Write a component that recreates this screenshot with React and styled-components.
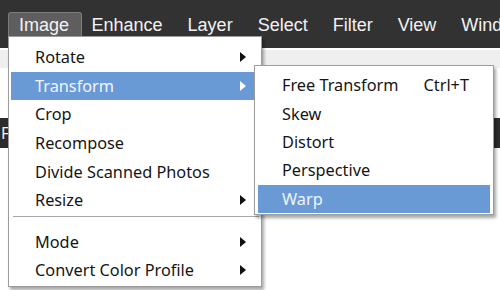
import React from "react";
import styled, { createGlobalStyle } from "styled-components";

const Global = createGlobalStyle`
  html, body {
    margin: 0;
    padding: 0;
    background: #ffffff;
  }
  body {
    width: 500px;
    height: 290px;
    overflow: hidden;
  }
`;

const Screen = styled.div`
  position: relative;
  width: 500px;
  height: 290px;
  background: #ffffff;
  overflow: hidden;
`;

const MenuBar = styled.div`
  display: flex;
  align-items: flex-start;
  height: 48px;
  padding: 12px 0 0 8px;
  background: #323232;
  box-sizing: border-box;
  overflow: hidden;
`;

const BarItem = styled.div`
  flex-shrink: 0;
  height: 24px;
  padding: ${(p) => (p.$active ? "0 12px 0 10px" : "0 11.5px")};
  box-sizing: border-box;
  font-family: "Liberation Sans", Arial, sans-serif;
  font-size: 18px;
  line-height: 24px;
  color: #f2f2f2;
  white-space: nowrap;
  background: ${(p) => (p.$active ? "#5e5e5e" : "transparent")};
  border: 1px solid ${(p) => (p.$active ? "#7c7c7c" : "transparent")};
  border-bottom: none;
  border-radius: 3px 3px 0 0;
  margin-right: ${(p) => (p.$active ? "-3px" : "0")};
`;

const Workspace = styled.div`
  height: 242px;
  display: flex;
  flex-direction: column;
`;

const TabStrip = styled.div`
  height: 18px;
  margin-top: 2px;
  background: #efefef;
`;

const Canvas = styled.div`
  height: 50px;
  background: #ffffff;
`;

const OptionsBar = styled.div`
  height: 30px;
  background: #2c2c2c;
  padding-left: 1px;
  font-family: "Noto Sans", sans-serif;
  font-size: 16px;
  line-height: 30px;
  color: #f0f0f0;
  white-space: nowrap;
`;

const Menu = styled.div`
  position: absolute;
  left: ${(p) => p.$left}px;
  top: ${(p) => p.$top}px;
  width: ${(p) => p.$width}px;
  box-sizing: border-box;
  display: flex;
  flex-direction: column;
  padding: ${(p) => p.$pad};
  background: #ffffff;
  border: 1px solid #9c9c9c;
  box-shadow: 2px 3px 3px rgba(0, 0, 0, 0.35);
`;

const Item = styled.div`
  display: flex;
  align-items: center;
  height: ${(p) => p.$h}px;
  padding: 0 13px 0 24px;
  font-family: "Noto Sans", "Open Sans", sans-serif;
  font-size: 16.3px;
  color: ${(p) => (p.$hl ? "#f0f5ff" : "#151515")};
  background: ${(p) => (p.$hl ? "#6a9ad6" : "transparent")};
  white-space: nowrap;
`;

const Label = styled.span`
  flex: 1;
`;

const Shortcut = styled.span`
  margin-right: 8px;
`;

const Separator = styled.div`
  height: 1px;
  margin: 1px 0 11px 2px;
  background: #a8a8a8;
`;

const Arrow = ({ light }) => (
  <svg width="6" height="10" viewBox="0 0 6 10">
    <path d="M0 0 L6 5 L0 10 Z" fill={light ? "#ffffff" : "#111111"} />
  </svg>
);

const bar = ["Image", "Enhance", "Layer", "Select", "Filter", "View", "Window"];

export default function App() {
  return (
    <Screen>
      <Global />
      <MenuBar>
        {bar.map((b, i) => (
          <BarItem key={b} $active={i === 0}>
            {b}
          </BarItem>
        ))}
      </MenuBar>
      <Workspace>
        <TabStrip />
        <Canvas />
        <OptionsBar>F</OptionsBar>
      </Workspace>

      <Menu $left={8} $top={36} $width={254} $pad="6px 2px 1px 2px">
        <Item $h={28.6}>
          <Label>Rotate</Label>
          <Arrow />
        </Item>
        <Item $h={28.6} $hl>
          <Label>Transform</Label>
          <Arrow light />
        </Item>
        <Item $h={28.6}>
          <Label>Crop</Label>
        </Item>
        <Item $h={28.6}>
          <Label>Recompose</Label>
        </Item>
        <Item $h={28.6}>
          <Label>Divide Scanned Photos</Label>
        </Item>
        <Item $h={28.6}>
          <Label>Resize</Label>
          <Arrow />
        </Item>
        <Separator />
        <Item $h={28.6}>
          <Label>Mode</Label>
          <Arrow />
        </Item>
        <Item $h={28.6}>
          <Label>Convert Color Profile</Label>
          <Arrow />
        </Item>
      </Menu>

      <Menu $left={254} $top={65} $width={240} $pad="5px 3px 1px 3px">
        <Item $h={28.4}>
          <Label>Free Transform</Label>
          <Shortcut>Ctrl+T</Shortcut>
        </Item>
        <Item $h={28.4}>
          <Label>Skew</Label>
        </Item>
        <Item $h={28.4}>
          <Label>Distort</Label>
        </Item>
        <Item $h={28.4}>
          <Label>Perspective</Label>
        </Item>
        <Item $h={28.4} $hl>
          <Label>Warp</Label>
        </Item>
      </Menu>
    </Screen>
  );
}
